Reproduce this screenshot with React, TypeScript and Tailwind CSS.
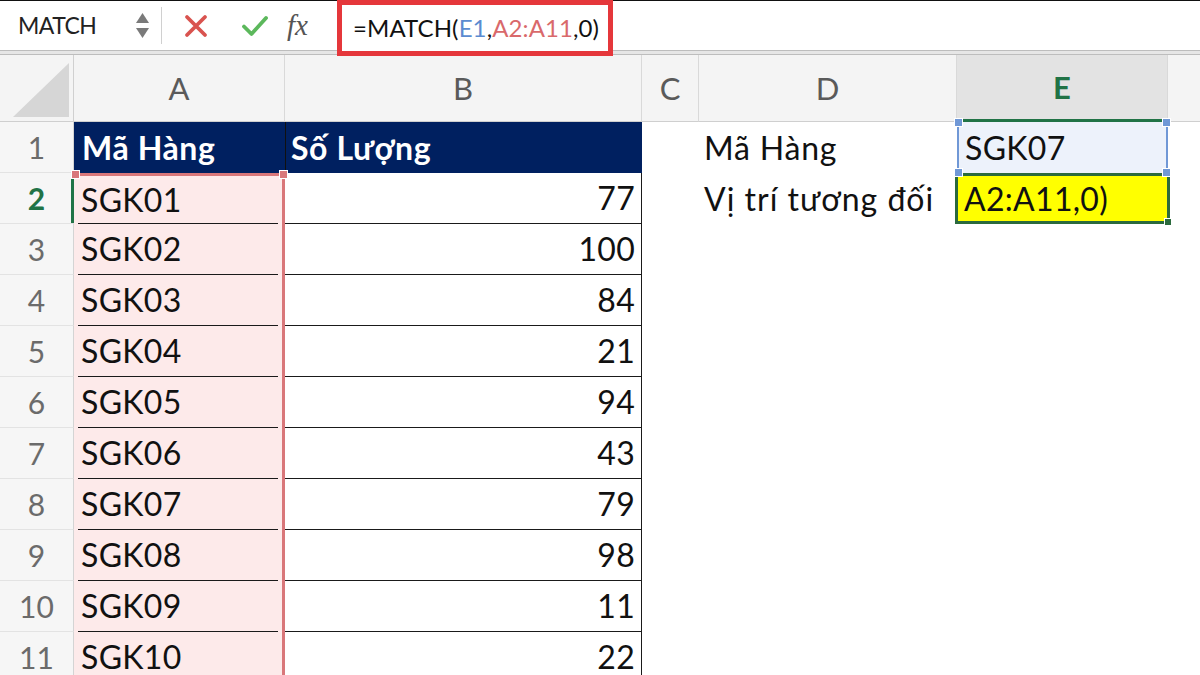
import { ReactNode } from "react";

const DATA: [string, number][] = [
	["SGK01", 77],
	["SGK02", 100],
	["SGK03", 84],
	["SGK04", 21],
	["SGK05", 94],
	["SGK06", 43],
	["SGK07", 79],
	["SGK08", 98],
	["SGK09", 11],
	["SGK10", 22],
];

function RowHeader({ n, active }: { n: number; active?: boolean }) {
	return (
		<div
			className={
				"relative w-[74px] shrink-0 h-full flex items-center justify-center bg-[#f6f6f6] border-r border-b border-r-[#d4d4d4] border-b-[#e3e3e3] " +
				(active ? "text-[#217346] font-bold" : "text-[#6b6b6b]")
			}
		>
			<span className="text-[30px] leading-none">{n}</span>
			{active && <span className="absolute right-[-1px] top-0 bottom-0 w-[3px] bg-[#217346]" />}
		</div>
	);
}

function ColHeader({ w, label, active }: { w: string; label: string; active?: boolean }) {
	return (
		<div
			className={
				w +
				" shrink-0 h-full flex items-center justify-center border-r border-[#d9d9d9] " +
				(active
					? "bg-[#e3e3e3] text-[#217346] font-bold border-b-[3px] border-b-[#217346]"
					: "bg-[#f4f4f4] text-[#5a5a5a] border-b border-b-[#cfcfcf]")
			}
		>
			<span className="text-[31px] leading-none">{label}</span>
		</div>
	);
}

function Handle({ className }: { className: string }) {
	return <span className={"absolute w-[9px] h-[9px] border border-white " + className} />;
}

function Row({ children }: { children: ReactNode }) {
	return <div className="flex h-[51px] shrink-0">{children}</div>;
}

export default function App() {
	return (
		<div className="w-[1200px] h-[675px] overflow-hidden bg-white font-['Lato',sans-serif] text-[#111]">
			{/* formula bar */}
			<div className="flex h-[50px] border-t border-[#111] bg-white relative z-10">
				<div className="w-[162px] shrink-0 flex items-center pl-[18px] border-r border-[#d0d0d0] my-[6px]">
					<span className="text-[23px] text-[#222] tracking-tight">MATCH</span>
					<div className="ml-auto mr-[12px] flex flex-col items-center gap-[5px]">
						<svg width="13" height="10" viewBox="0 0 13 10">
							<path d="M6.5 0 L13 10 H0 Z" fill="#7a7a7a" />
						</svg>
						<svg width="13" height="10" viewBox="0 0 13 10">
							<path d="M0 0 H13 L6.5 10 Z" fill="#7a7a7a" />
						</svg>
					</div>
				</div>
				<div className="w-[175px] shrink-0 flex items-center">
					<svg className="ml-[22px]" width="24" height="24" viewBox="0 0 24 24">
						<path d="M3 3 L21 21 M21 3 L3 21" stroke="#d9534f" strokeWidth="3.8" strokeLinecap="round" />
					</svg>
					<svg className="ml-[33px]" width="28" height="24" viewBox="0 0 28 24">
						<path d="M3 12.5 L10.5 20 L25 4" stroke="#5cb85c" strokeWidth="3.8" fill="none" strokeLinecap="round" strokeLinejoin="round" />
					</svg>
					<span className="ml-[18px] text-[29px] italic text-[#555] font-['Liberation_Serif',serif] leading-none">
						fx
					</span>
				</div>
				<div className="w-[276px] h-[56px] shrink-0 border-[5px] border-[#e5373b] bg-white flex items-center pl-[11px] -mt-[1px]">
					<span className="text-[24px] text-[#111] tracking-[0.1px]">
						=MATCH(<span className="text-[#5b8bd0]">E1</span>,<span className="text-[#d9696b]">A2:A11</span>,0)
					</span>
				</div>
			</div>
			<div className="h-[5px] border-y border-[#bdbdbd] bg-[#e6e6e6]" />

			{/* column headers */}
			<div className="flex h-[67px]">
				<div className="w-[74px] shrink-0 h-full bg-[#f4f4f4] border-r border-b border-r-[#d0d0d0] border-b-[#cfcfcf] flex items-end justify-end pr-[4px] pb-[4px]">
					<svg width="56" height="54" viewBox="0 0 56 54">
						<path d="M56 0 V54 H0 Z" fill="#d6d6d6" />
					</svg>
				</div>
				<ColHeader w="w-[211px]" label="A" />
				<ColHeader w="w-[357px]" label="B" />
				<ColHeader w="w-[57px]" label="C" />
				<ColHeader w="w-[258px]" label="D" />
				<ColHeader w="w-[211px]" label="E" active />
				<div className="flex-1 h-full bg-[#f4f4f4] border-b border-[#cfcfcf]" />
			</div>

			{/* row 1 */}
			<Row>
				<RowHeader n={1} />
				<div className="w-[211px] shrink-0 bg-[#002060] flex items-center pl-[8px] text-white font-bold">
					<span className="text-[32px] tracking-[0.6px] whitespace-nowrap">Mã Hàng</span>
				</div>
				<div className="w-[357px] shrink-0 bg-[#002060] border-l border-[#101010] flex items-center pl-[5px] text-white font-bold">
					<span className="text-[32px] tracking-[0.6px] whitespace-nowrap">Số Lượng</span>
				</div>
				<div className="w-[57px] shrink-0" />
				<div className="w-[258px] shrink-0 flex items-center pl-[5px]">
					<span className="text-[32px] tracking-[0.8px] whitespace-nowrap">Mã Hàng</span>
				</div>
				<div className="relative w-[211px] shrink-0 bg-[#edf2fb] border-x-2 border-[#7098d6] flex items-center pl-[6px]">
					<span className="text-[32px] tracking-[0.3px]">SGK07</span>
					<Handle className="bg-[#7098d6] -left-[5px] -top-[4px]" />
					<Handle className="bg-[#7098d6] -right-[5px] -top-[4px]" />
					<Handle className="bg-[#7098d6] -left-[5px] -bottom-[4px] z-20" />
					<Handle className="bg-[#7098d6] -right-[5px] -bottom-[4px] z-20" />
				</div>
			</Row>

			{/* data rows */}
			{DATA.map(([code, qty], i) => (
				<Row key={code}>
					<RowHeader n={i + 2} active={i === 0} />
					<div
						className={
							"relative w-[211px] shrink-0 bg-[#fdeaea] pl-[4px] pr-[4px] border-r-[3px] border-r-[#d9777a] " +
							(i === 0 ? "border-t-[3px] border-t-[#d9777a]" : "")
						}
					>
						<div className="h-full border-b border-[#1a1a1a] flex items-center pl-[3px]">
							<span className="text-[32px] tracking-[0.3px]">{code}</span>
						</div>
						{i === 0 && (
							<>
								<Handle className="bg-[#d9777a] -left-[3px] -top-[6px]" />
								<Handle className="bg-[#d9777a] -right-[6px] -top-[6px]" />
							</>
						)}
					</div>
					<div className="w-[357px] shrink-0 border-b border-r border-[#1a1a1a] flex items-center justify-end pr-[6px]">
						<span className="text-[32px] tracking-[0.3px]">{qty}</span>
					</div>
					<div className="w-[57px] shrink-0" />
					{i === 0 ? (
						<>
							<div className="w-[258px] shrink-0 flex items-center pl-[5px]">
								<span className="text-[32px] tracking-[1px] whitespace-nowrap">Vị trí tương đối</span>
							</div>
							<div className="relative w-[215px] -ml-[2px] shrink-0 bg-[#ffff00] border-[3px] border-[#2b6a3d] flex items-center pl-[6px]">
								<span className="text-[32px] tracking-[0.3px]">A2:A11,0)</span>
								<span className="absolute -right-[5px] -bottom-[5px] w-[8px] h-[8px] bg-[#2b6a3d] border border-white" />
							</div>
						</>
					) : null}
				</Row>
			))}
		</div>
	);
}
